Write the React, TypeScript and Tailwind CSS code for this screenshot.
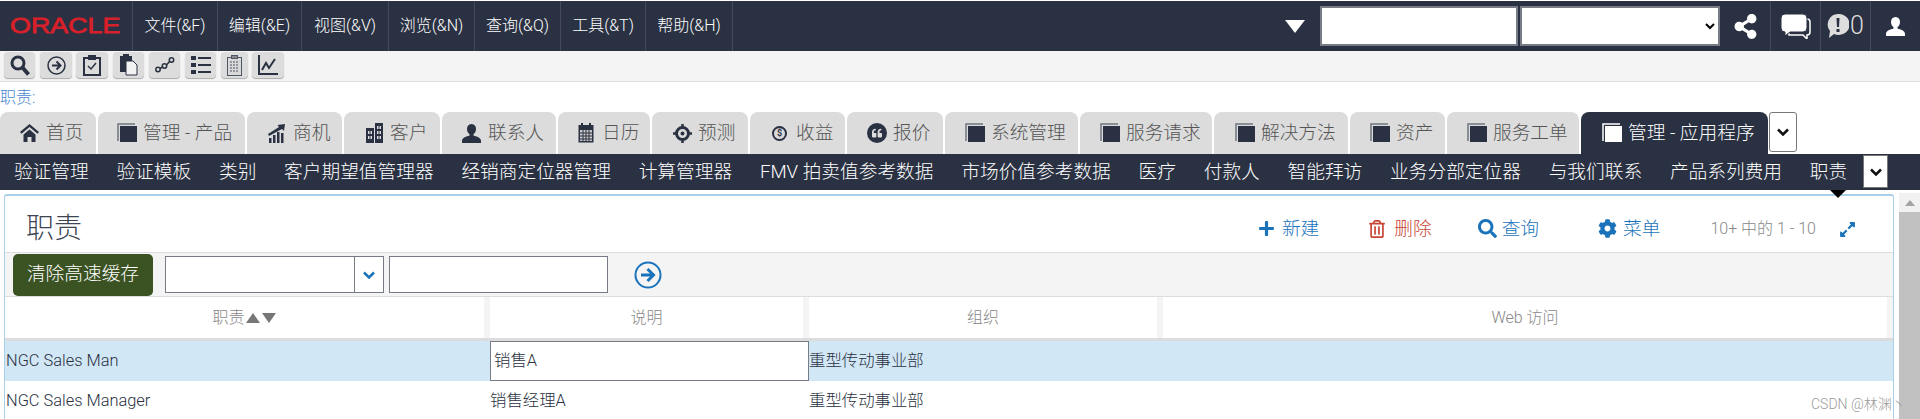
import { FaCog, FaExpandAlt, FaPlus, FaRegTrashAlt, FaSearch, FaShareAlt, FaQuoteLeft } from "react-icons/fa";

const font = "font-['Roboto','Noto_Sans_CJK_SC',sans-serif]";

const menus = [
  { label: "文件(&F)", w: "w-[85px]" },
  { label: "编辑(&E)", w: "w-[84px]" },
  { label: "视图(&V)", w: "w-[87px]" },
  { label: "浏览(&N)", w: "w-[86px]" },
  { label: "查询(&Q)", w: "w-[86px]" },
  { label: "工具(&T)", w: "w-[85px]" },
  { label: "帮助(&H)", w: "w-[87px]" },
];

const CloneIcon = ({ light }: { light?: boolean }) => (
  <svg width="20" height="20" viewBox="0 0 20 20" className="shrink-0">
    <path d="M1 18V1h17" fill="none" stroke={light ? "#ffffff" : "#6f7480"} strokeWidth="1.500" />
    <rect x="3" y="3" width="17" height="16" fill={light ? "#ffffff" : "#2a3142"} />
  </svg>
);

const HomeIcon = () => (
  <svg width="19" height="18" viewBox="0 0 19 18" fill="#2a3142" className="shrink-0">
    <path d="M9.500 0 0 8l1.500 1.800 8-6.800 8 6.800L19 8z" />
    <path d="M3.500 10.500 9.500 5.500l6 5V18h-4v-5h-4v5h-4z" />
  </svg>
);

const ChartIcon = () => (
  <svg width="18" height="19" viewBox="0 0 18 19" fill="#2a3142" className="shrink-0">
    <rect x="1" y="14" width="2.500" height="5" />
    <rect x="5" y="11" width="2.500" height="8" />
    <rect x="9" y="8" width="2.500" height="11" />
    <rect x="13" y="9" width="2.500" height="10" />
    <path d="M0 10 11 3 9.500 1 17 0l-1 7-2-2L1 12z" />
  </svg>
);

const BuildingIcon = () => (
  <svg width="17" height="20" viewBox="0 0 17 20" className="shrink-0">
    <rect x="0" y="5" width="8" height="15" fill="#2a3142" />
    <rect x="9" y="0" width="8" height="20" fill="#2a3142" />
    <path d="M2 8h4v3H2zM2 13h4v3H2zM11 3h4v3h-4zM11 8h4v3h-4zM11 13h4v3h-4z" fill="#dcdcdc" />
    <path d="M4 8v8M13 3v13" stroke="#2a3142" strokeWidth="1" />
  </svg>
);

const PersonIcon = ({ color = "#2a3142" }: { color?: string }) => (
  <svg width="19" height="19" viewBox="0 0 19 19" fill={color} className="shrink-0">
    <path d="M9.500 0c3 0 4.500 2.200 4.500 5 0 2.500-1.200 4.200-2.500 5.200v1.300c3 1 7.500 2 7.500 5.500v2H0v-2c0-3.500 4.500-4.500 7.500-5.500v-1.300C6.200 9.200 5 7.500 5 5c0-2.800 1.500-5 4.500-5z" />
  </svg>
);

const CalendarIcon = () => (
  <svg width="16" height="20" viewBox="0 0 16 20" className="shrink-0">
    <rect x="0.500" y="2" width="15" height="17.500" fill="#2a3142" />
    <rect x="3" y="0" width="2" height="4" fill="#2a3142" />
    <rect x="11" y="0" width="2" height="4" fill="#2a3142" />
    <path d="M2 7h12v11H2z" fill="#c9c9c9" />
    <path d="M2 10h12M2 13h12M2 16h12M5 7v11M8 7v11M11 7v11" stroke="#2a3142" strokeWidth="1" />
  </svg>
);

const TargetIcon = () => (
  <svg width="19" height="19" viewBox="0 0 19 19" fill="none" stroke="#2a3142" className="shrink-0">
    <circle cx="9.500" cy="9.500" r="6" strokeWidth="3" />
    <circle cx="9.500" cy="9.500" r="2" fill="#2a3142" strokeWidth="0" />
    <path d="M9.500 0v4M9.500 15v4M0 9.500h4M15 9.500h4" strokeWidth="2.500" />
  </svg>
);

const DollarIcon = () => (
  <span className="flex h-[15px] w-[15px] shrink-0 items-center justify-center rounded-full border-2 border-[#2a3142] text-[9px] leading-none font-bold text-[#2a3142]">
    $
  </span>
);

const QuoteIcon = () => (
  <span className="flex h-[20px] w-[20px] shrink-0 items-center justify-center rounded-full bg-[#2a3142] text-[#dcdcdc]">
    <FaQuoteLeft size={10} />
  </span>
);

const tabs = [
  { label: "首页", w: "w-[96px]", cls: "pl-[20px] gap-[7px]", icon: <HomeIcon /> },
  { label: "管理 - 产品", w: "w-[147px]", cls: "pl-[19px] gap-[6px]", icon: <CloneIcon /> },
  { label: "商机", w: "w-[95px]", cls: "pl-[21px] gap-[7px]", icon: <ChartIcon /> },
  { label: "客户", w: "w-[96px]", cls: "pl-[22px] gap-[7px]", icon: <BuildingIcon /> },
  { label: "联系人", w: "w-[114px]", cls: "pl-[20px] gap-[7px]", icon: <PersonIcon /> },
  { label: "日历", w: "w-[92px]", cls: "pl-[20px] gap-[8px]", icon: <CalendarIcon /> },
  { label: "预测", w: "w-[96px]", cls: "pl-[21px] gap-[6px]", icon: <TargetIcon /> },
  { label: "收益", w: "w-[95px]", cls: "pl-[22px] gap-[9px]", icon: <DollarIcon /> },
  { label: "报价", w: "w-[96px]", cls: "pl-[20px] gap-[6px]", icon: <QuoteIcon /> },
  { label: "系统管理", w: "w-[133px]", cls: "pl-[20px] gap-[6px]", icon: <CloneIcon /> },
  { label: "服务请求", w: "w-[132px]", cls: "pl-[20px] gap-[6px]", icon: <CloneIcon /> },
  { label: "解决方法", w: "w-[134px]", cls: "pl-[21px] gap-[6px]", icon: <CloneIcon /> },
  { label: "资产", w: "w-[95px]", cls: "pl-[20px] gap-[6px]", icon: <CloneIcon /> },
  { label: "服务工单", w: "w-[132px]", cls: "pl-[20px] gap-[6px]", icon: <CloneIcon /> },
];

const navItems = [
  "验证管理",
  "验证模板",
  "类别",
  "客户期望值管理器",
  "经销商定位器管理",
  "计算管理器",
  "FMV 拍卖值参考数据",
  "市场价值参考数据",
  "医疗",
  "付款人",
  "智能拜访",
  "业务分部定位器",
  "与我们联系",
  "产品系列费用",
  "职责",
];

const toolButtons = [
  {
    w: "w-[31px]",
    mr: "mr-[5px]",
    icon: (
      <svg width="20" height="21" viewBox="0 0 20 21" fill="none" stroke="#2a3142">
        <circle cx="8" cy="8" r="6" strokeWidth="3" />
        <path d="M12.500 12.500l6 7" strokeWidth="4" />
      </svg>
    ),
  },
  {
    w: "w-[32px]",
    mr: "mr-[4px]",
    icon: (
      <svg width="19" height="19" viewBox="0 0 19 19" fill="none" stroke="#2a3142" strokeWidth="1.500">
        <circle cx="9.500" cy="9.500" r="8.500" />
        <path d="M5 9.500h8M9.500 5.500l4 4-4 4" strokeWidth="2" />
      </svg>
    ),
  },
  {
    w: "w-[32px]",
    mr: "mr-[5px]",
    icon: (
      <svg width="18" height="21" viewBox="0 0 18 21" fill="none" stroke="#2a3142" strokeWidth="2">
        <rect x="1" y="3" width="16" height="17" />
        <rect x="6" y="1" width="6" height="3" fill="#2a3142" />
        <path d="M5 11l3 3 5-6" strokeWidth="1.500" />
      </svg>
    ),
  },
  {
    w: "w-[31px]",
    mr: "mr-[5px]",
    icon: (
      <svg width="19" height="22" viewBox="0 0 19 22">
        <path d="M1 2h12v16H1z" fill="#2a3142" />
        <rect x="4" y="0" width="6" height="3" fill="#2a3142" />
        <path d="M7 7h7l4 4v10H7z" fill="#f2f2f2" stroke="#2a3142" strokeWidth="1" />
      </svg>
    ),
  },
  {
    w: "w-[31px]",
    mr: "mr-[5px]",
    icon: (
      <svg width="20" height="16" viewBox="0 0 20 16" fill="none" stroke="#2a3142" strokeWidth="1.500">
        <circle cx="3" cy="12.500" r="2.200" />
        <circle cx="9.500" cy="9" r="2.200" />
        <circle cx="16.500" cy="3" r="2.200" />
        <path d="M5 11.500l2.500-1.500M11.500 8l3-3.500" />
      </svg>
    ),
  },
  {
    w: "w-[31px]",
    mr: "mr-[5px]",
    icon: (
      <svg width="20" height="19" viewBox="0 0 20 19" fill="#2a3142">
        <rect x="0" y="0" width="5" height="4" />
        <rect x="7" y="1" width="13" height="2" />
        <rect x="0" y="7" width="5" height="4" />
        <rect x="7" y="8" width="13" height="2" />
        <rect x="0" y="14" width="5" height="4" />
        <rect x="7" y="15" width="13" height="2" />
      </svg>
    ),
  },
  {
    w: "w-[27px]",
    mr: "mr-[4px]",
    icon: (
      <svg width="15" height="21" viewBox="0 0 15 21" fill="none" stroke="#4f5666" strokeWidth="1">
        <rect x="0.500" y="2.500" width="14" height="18" fill="#d8d8d8" />
        <rect x="4.500" y="0.500" width="6" height="3" fill="#8a8a8a" />
        <path d="M3 7h9M3 10h9M3 13h9M3 16h9" strokeDasharray="2 1" />
      </svg>
    ),
  },
  {
    w: "w-[32px]",
    mr: "",
    icon: (
      <svg width="20" height="20" viewBox="0 0 20 20" fill="none" stroke="#2a3142" strokeWidth="2">
        <path d="M1 0v19h19" />
        <path d="M4 15l4-7 3 5 6-9" />
      </svg>
    ),
  },
];

const Chevron = ({ color = "#111111" }: { color?: string }) => (
  <svg width="12" height="8" viewBox="0 0 12 8" fill="none" stroke={color} strokeWidth="2.500">
    <path d="M1 1.500l5 5 5-5" />
  </svg>
);

const gridCols = "grid grid-cols-[485px_319px_354px_730px]";

const App = () => {
  return (
    <div className={`relative h-[419px] w-[1920px] overflow-hidden bg-white text-[16px] font-light ${font}`}>
      {/* top bar */}
      <div className="mt-px flex h-[50px] items-stretch bg-[#2a3142] text-white">
        <div className="flex w-[133px] items-center border-r border-[#434a5b] pl-[10px]">
          <span className="origin-left scale-x-[1.22] font-['Liberation_Sans',sans-serif] text-[22px] leading-none font-normal text-[#d8202a] [-webkit-text-stroke:0.8px_#d8202a]">
            ORACLE
          </span>
        </div>
        {menus.map((m) => (
          <div key={m.label} className={`flex ${m.w} items-center justify-center border-r border-[#434a5b]`}>
            {m.label}
          </div>
        ))}
        <div className="ml-auto flex items-center">
          <div className="mr-[15px] h-0 w-0 border-x-[10px] border-t-[13px] border-x-transparent border-t-white" />
          <input className="h-[40px] w-[198px] border-2 border-[#777b86] bg-white" />
          <select className="ml-[2px] h-[40px] w-[200px] border-2 border-[#777b86] bg-white text-black" />
        </div>
        <div className="flex w-[50px] items-center justify-center">
          <FaShareAlt size={25} />
        </div>
        <div className="flex w-[50px] items-center justify-center border-l border-[#434a5b]">
          <svg width="30" height="25" viewBox="0 0 30 25">
            <path d="M6 5h20a3 3 0 0 1 3 3v10c0 2-1 3-3 3v4l-4-4H8z" fill="none" stroke="#ffffff" strokeWidth="1.500" />
            <path d="M4 0h18a4 4 0 0 1 4 4v10a4 4 0 0 1-4 4H9l-5 4v-4a4 4 0 0 1-4-4V4a4 4 0 0 1 4-4z" fill="#ffffff" stroke="#2a3142" strokeWidth="1" />
          </svg>
        </div>
        <div className="flex w-[50px] items-center justify-center gap-px border-l border-[#434a5b] text-[25px] text-[#dddddd]">
          <svg width="22" height="24" viewBox="0 0 22 24">
            <path d="M11 0a11 10.500 0 1 1-4 20l-5 4 1-7A10.500 10.500 0 0 1 11 0z" fill="#dddddd" />
            <path d="M9.500 4h3l-.5 9h-2zM9.500 15h3v3h-3z" fill="#2a3142" />
          </svg>
          0
        </div>
        <div className="flex w-[50px] items-center justify-center border-l border-[#434a5b]">
          <PersonIcon color="#ffffff" />
        </div>
      </div>

      {/* icon toolbar */}
      <div className="flex h-[31px] items-start border-b border-[#dddddd] bg-[#f4f4f4] pt-px pl-[4px]">
        {toolButtons.map((b, i) => (
          <div
            key={i}
            className={`flex h-[26px] ${b.w} ${b.mr} items-center justify-center rounded-[4px] bg-[#dcdcdc] shadow-[0_1px_1px_#aaaaaa]`}
          >
            {b.icon}
          </div>
        ))}
      </div>

      <div className="h-[30px] pt-[6px] leading-[20px] text-[#4a86d0]">职责:</div>

      {/* main tabs */}
      <div className="flex h-[42px] items-stretch gap-[2px] text-[18.700px] text-[#555555]">
        {tabs.map((t) => (
          <div key={t.label} className={`flex ${t.w} ${t.cls} items-center rounded-t-[8px] bg-[#dcdcdc]`}>
            {t.icon}
            {t.label}
          </div>
        ))}
        <div className="flex w-[187px] items-center gap-[6px] rounded-t-[8px] bg-[#2a3142] pl-[21px] text-white">
          <CloneIcon light />
          管理 - 应用程序
        </div>
        <div className="-ml-px flex h-[40px] w-[28px] items-center justify-center rounded-[3px] border border-[#777777] bg-white">
          <Chevron />
        </div>
      </div>

      {/* sub nav */}
      <div className="relative flex h-[36px] items-center bg-[#2a3142] text-[18.700px] text-white">
        {navItems.map((n) => (
          <div key={n} className="px-[13.900px] whitespace-nowrap">
            {n}
          </div>
        ))}
        <div className="absolute top-px left-[1863px] flex h-[33px] w-[25px] items-center justify-center border border-[#777777] bg-white">
          <Chevron />
        </div>
        <div className="absolute top-full left-[1830px] h-0 w-0 border-x-[8px] border-t-[8px] border-x-transparent border-t-black" />
      </div>

      {/* panel and scrollbar */}
      <div className="flex items-start pl-[4px]">
        <div className="mt-[4px] w-[1890px] rounded-t-[3px] border-x border-t-2 border-[#a9cfe9]">
          <div className="flex h-[56px] items-center pt-[10px] pr-[37px] pl-[21px] text-[18.700px]">
            <div className="text-[28px] leading-none text-[#3d4452]">职责</div>
            <div className="ml-auto flex items-center gap-[7px] text-[#1a73ba]">
              <FaPlus size={17} />
              新建
            </div>
            <div className="ml-[49px] flex items-center gap-[8px] text-[#c74634]">
              <FaRegTrashAlt size={18} />
              删除
            </div>
            <div className="ml-[46px] flex items-center gap-[5px] text-[#1a73ba]">
              <FaSearch size={19} />
              查询
            </div>
            <div className="ml-[59px] flex items-center gap-[6px] text-[#1a73ba]">
              <FaCog size={19} />
              菜单
            </div>
            <div className="ml-[50px] text-[16px] text-[#888888]">10+ 中的 1 - 10</div>
            <FaExpandAlt size={17} color="#1a73ba" className="ml-[23px]" />
          </div>

          <div className="flex h-[45px] items-center border-y border-[#dddddd] bg-[#f4f4f4] pl-[8px]">
            <button className="h-[42px] w-[140px] rounded-[5px] bg-[#3b5323] text-[18.700px] text-white">
              清除高速缓存
            </button>
            <div className="ml-[12px] flex h-[37px] w-[219px] items-stretch border border-[#777b86] bg-white">
              <div className="flex-1 border-r border-[#777b86]" />
              <div className="flex w-[28px] items-center justify-center">
                <Chevron color="#1a73ba" />
              </div>
            </div>
            <input className="ml-[5px] h-[37px] w-[219px] border border-[#777b86] bg-white" />
            <svg width="28" height="28" viewBox="0 0 28 28" fill="none" stroke="#1a73ba" strokeWidth="2" className="ml-[26px]">
              <circle cx="14" cy="14" r="12.500" />
              <path d="M7 14h12M13.500 8l6 6-6 6" strokeWidth="3" />
            </svg>
          </div>

          <div className={`${gridCols} h-[44px] border-b-[3px] border-[#dcdcdc] text-[#888888]`}>
            <div className="flex items-center justify-center border-r-[6px] border-[#f4f4f4]">
              职责
              <svg width="32" height="12" viewBox="0 0 32 12" fill="#777777">
                <path d="M1 11 8 1l7 10zM17 1h14l-7 10z" />
              </svg>
            </div>
            <div className="flex items-center justify-center border-r-[6px] border-[#f4f4f4]">说明</div>
            <div className="flex items-center justify-center border-r-[6px] border-[#f4f4f4]">组织</div>
            <div className="flex items-center justify-center border-r-[6px] border-[#f4f4f4]">Web 访问</div>
          </div>

          <div className={`${gridCols} h-[40px] bg-[#d2e7f5] text-[16.400px] text-[#2a3142]`}>
            <div className="flex items-center pl-[1px]">NGC Sales Man</div>
            <div className="flex items-center border border-[#777b86] bg-white pl-[3px]">销售A</div>
            <div className="flex items-center">重型传动事业部</div>
            <div />
          </div>

          <div className={`${gridCols} h-[40px] text-[16.400px] text-[#2a3142]`}>
            <div className="flex items-center pl-[1px]">NGC Sales Manager</div>
            <div className="flex items-center">销售经理A</div>
            <div className="flex items-center">重型传动事业部</div>
            <div />
          </div>
        </div>

        {/* scrollbar */}
        <div className="mt-[3px] ml-[5px] h-[230px] w-[21px] bg-[#f1f1f1]">
          <div className="flex h-[19px] items-center justify-center">
            <div className="h-0 w-0 border-x-[5px] border-b-[6px] border-x-transparent border-b-[#a3a3a3]" />
          </div>
          <div className="h-full bg-[#c1c1c1]" />
        </div>
      </div>

      <div className="absolute top-[394px] left-[1811px] text-[14px] text-[#9a9a9a]">CSDN @林渊丶</div>
    </div>
  );
};

export default App;
